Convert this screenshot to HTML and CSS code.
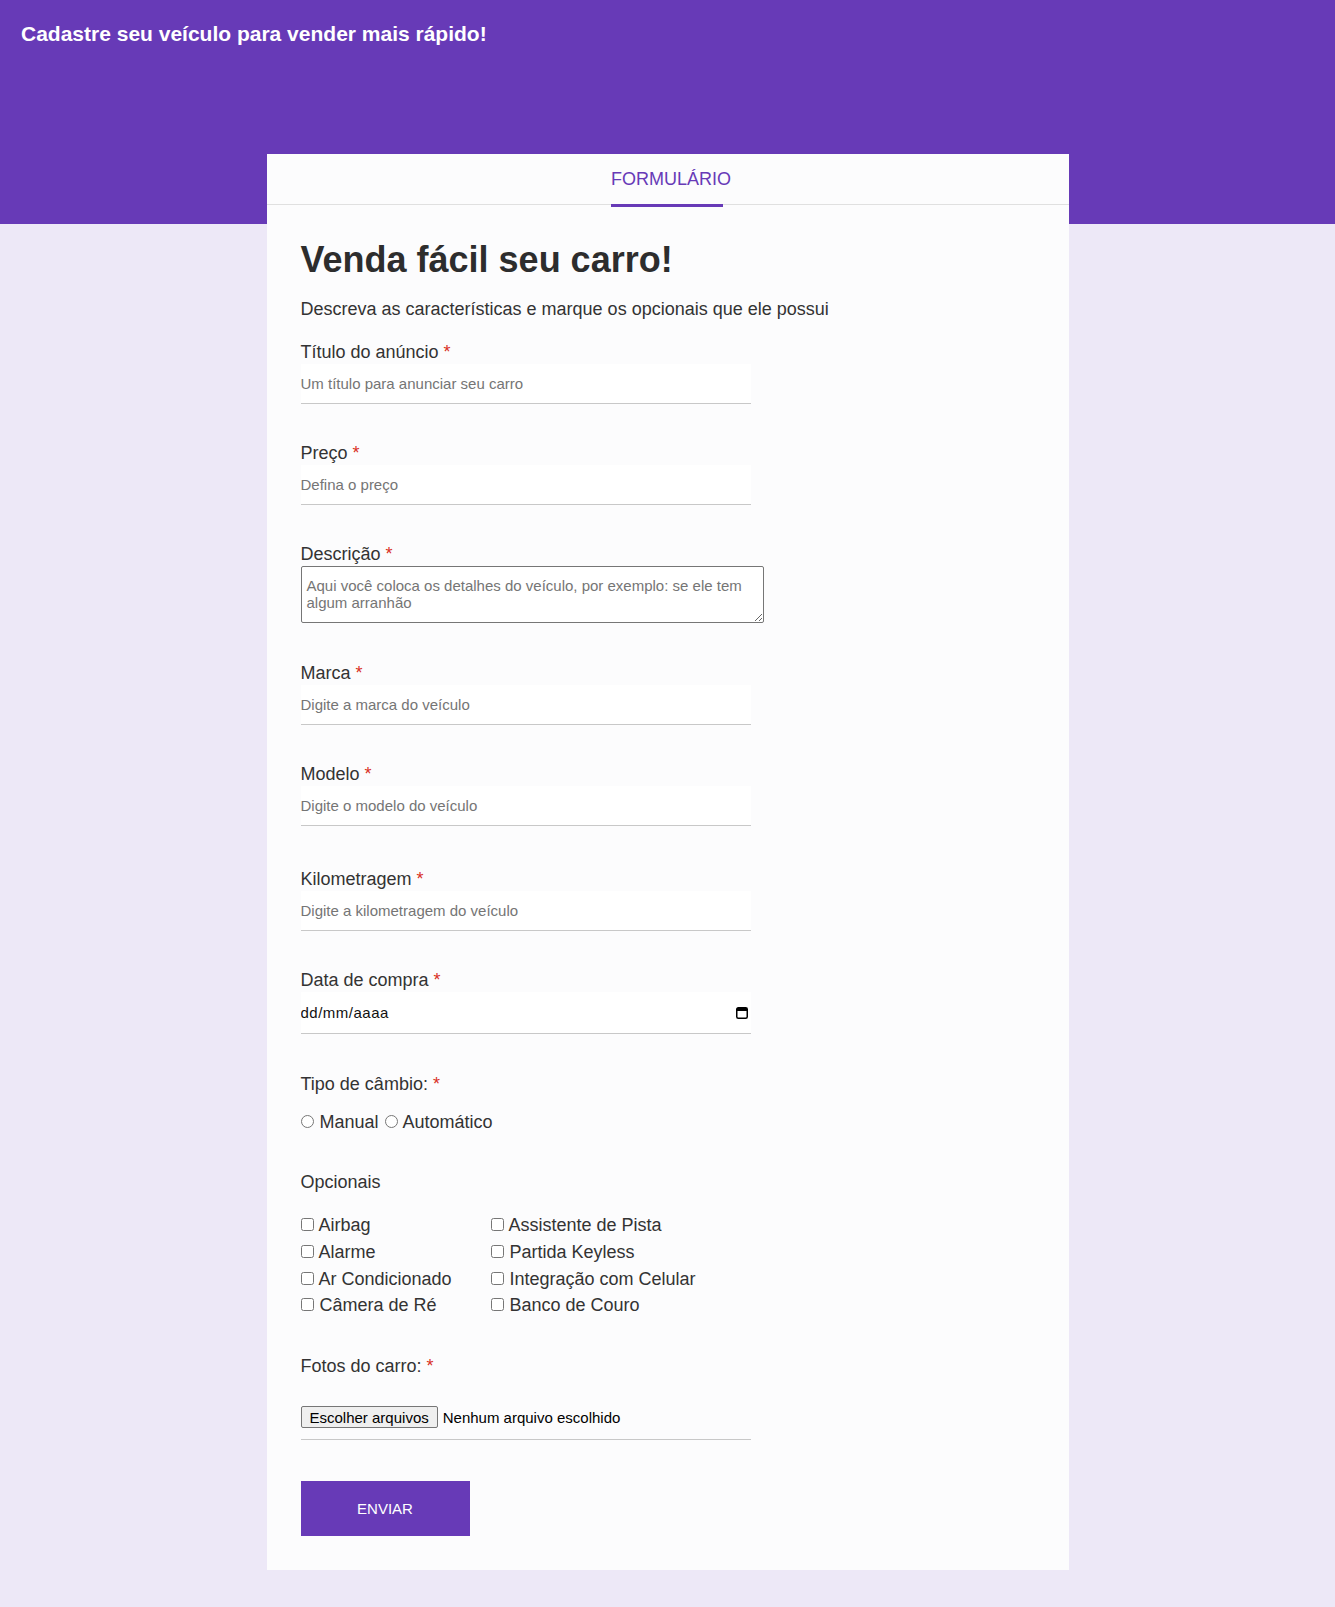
FILE: index.html
```html
<!DOCTYPE html>
<html lang="pt-BR">
<head>
<meta charset="utf-8">
<title>Cadastre seu veículo</title>
<link rel="stylesheet" href="styles.css">
</head>
<body>
<header class="topbar">
  <h1 class="topbar-title">Cadastre seu veículo para vender mais rápido!</h1>
</header>
<main class="card">
  <nav class="tabs">
    <div class="tab">
      <span class="tab-label">FORMULÁRIO</span>
      <span class="tab-indicator"></span>
    </div>
  </nav>
  <form class="form">
    <h2 class="form-title">Venda fácil seu carro!</h2>
    <p class="form-subtitle">Descreva as características e marque os opcionais que ele possui</p>

    <div class="field field-first">
      <label class="field-label">Título do anúncio <span class="req">*</span></label>
      <input class="text-input" type="text" placeholder="Um título para anunciar seu carro">
    </div>

    <div class="field">
      <label class="field-label">Preço <span class="req">*</span></label>
      <input class="text-input" type="text" placeholder="Defina o preço">
    </div>

    <div class="field">
      <label class="field-label">Descrição <span class="req">*</span></label>
      <textarea class="textarea" placeholder="Aqui você coloca os detalhes do veículo, por exemplo: se ele tem algum arranhão"></textarea>
    </div>

    <div class="field field-after-textarea">
      <label class="field-label">Marca <span class="req">*</span></label>
      <input class="text-input" type="text" placeholder="Digite a marca do veículo">
    </div>

    <div class="field">
      <label class="field-label">Modelo <span class="req">*</span></label>
      <input class="text-input" type="text" placeholder="Digite o modelo do veículo">
    </div>

    <div class="field field-wide-gap">
      <label class="field-label">Kilometragem <span class="req">*</span></label>
      <input class="text-input" type="text" placeholder="Digite a kilometragem do veículo">
    </div>

    <div class="field">
      <label class="field-label">Data de compra <span class="req">*</span></label>
      <div class="date-field">
        <input class="date-input" type="text" placeholder="dd/mm/aaaa">
        <svg class="date-icon" width="12" height="13" viewBox="0 0 12 13" aria-hidden="true">
          <rect x="0.75" y="1.75" width="10.5" height="10.5" rx="1.5" fill="none" stroke="#000" stroke-width="1.5"/>
          <rect x="1" y="2" width="10" height="3" fill="#000"/>
        </svg>
      </div>
    </div>

    <div class="field field-group field-cambio">
      <span class="field-label">Tipo de câmbio: <span class="req">*</span></span>
      <div class="radio-row">
        <label class="option"><input class="radio" type="radio" name="cambio"> Manual</label>
        <label class="option"><input class="radio" type="radio" name="cambio"> Automático</label>
      </div>
    </div>

    <div class="field field-group field-opcionais">
      <span class="field-label">Opcionais</span>
      <div class="check-grid">
        <label class="option"><input class="check" type="checkbox"> Airbag</label>
        <label class="option"><input class="check" type="checkbox"> Assistente de Pista</label>
        <label class="option"><input class="check" type="checkbox"> Alarme</label>
        <label class="option"><input class="check" type="checkbox"> Partida Keyless</label>
        <label class="option"><input class="check" type="checkbox"> Ar Condicionado</label>
        <label class="option"><input class="check" type="checkbox"> Integração com Celular</label>
        <label class="option"><input class="check" type="checkbox"> Câmera de Ré</label>
        <label class="option"><input class="check" type="checkbox"> Banco de Couro</label>
      </div>
    </div>

    <div class="field field-group field-fotos">
      <span class="field-label">Fotos do carro: <span class="req">*</span></span>
      <label class="file-field">
        <span class="file-button">Escolher arquivos</span>
        <span class="file-name">Nenhum arquivo escolhido</span>
        <input class="file-input" type="file" multiple>
      </label>
    </div>

    <button class="submit" type="button">ENVIAR</button>
  </form>
</main>
</body>
</html>
```

FILE: styles.css
```css
html, body {
  margin: 0;
  padding: 0;
}

body {
  background: #ede8f7;
  font-family: "Liberation Sans", Arial, sans-serif;
  color: #333;
  padding-bottom: 37px;
}

.topbar {
  background: #673ab7;
  height: 224px;
  box-sizing: border-box;
  padding: 22px 21px 0;
}

.topbar-title {
  margin: 0;
  color: #fff;
  font-size: 21px;
  font-weight: bold;
  line-height: normal;
}

.card {
  display: block;
  width: 802px;
  margin: -70px auto 0;
  background: #fcfcfd;
}

.tabs {
  display: flex;
  justify-content: center;
  border-bottom: 1px solid #e0e0e0;
}

.tab {
  display: flex;
  flex-direction: column;
  align-items: flex-start;
  padding: 15px 0 0 7px;
  margin-bottom: -3px;
  color: #673ab7;
  font-size: 18px;
}

.tab-label {
  line-height: normal;
}

.tab-indicator {
  display: block;
  width: 112px;
  height: 3px;
  margin-top: 14px;
  background: #673ab7;
}

.form {
  padding: 34px 34px 34px;
}

.form-title {
  margin: 0;
  font-size: 36px;
  font-weight: bold;
  color: #2d2d2d;
  line-height: normal;
}

.form-subtitle {
  margin: 18px 0 0;
  font-size: 18px;
  line-height: normal;
  color: #333;
}

.field {
  margin-top: 39px;
}

.field-first {
  margin-top: 22px;
}

.field-after-textarea {
  margin-top: 40px;
}

.field-wide-gap {
  margin-top: 43px;
}

.field-label {
  display: block;
  font-size: 18px;
  line-height: normal;
  color: #333;
}

.req {
  color: #d93025;
}

.text-input {
  display: block;
  box-sizing: border-box;
  width: 450px;
  height: 40px;
  margin-top: 1px;
  padding: 0;
  border: none;
  border-bottom: 1px solid #c8c8c8;
  background: #fff;
  font-family: "Liberation Sans", Arial, sans-serif;
  font-size: 15px;
  color: #333;
  outline: none;
}

.text-input::placeholder,
.textarea::placeholder {
  color: #757575;
  opacity: 1;
}

.textarea {
  display: block;
  box-sizing: border-box;
  width: 463px;
  height: 57px;
  margin-top: 1px;
  padding: 10px 5px;
  border: 1px solid #767676;
  border-radius: 2px;
  background: #fff;
  font-family: "Liberation Sans", Arial, sans-serif;
  font-size: 15px;
  line-height: normal;
}

.date-field {
  display: flex;
  align-items: center;
  box-sizing: border-box;
  width: 450px;
  height: 42px;
  margin-top: 1px;
  padding-right: 3px;
  border-bottom: 1px solid #c8c8c8;
  background: #fff;
}

.date-input {
  flex: 1;
  min-width: 0;
  border: none;
  padding: 0;
  background: transparent;
  font-family: "Liberation Sans", Arial, sans-serif;
  font-size: 15px;
  letter-spacing: 0.5px;
  outline: none;
}

.date-input::placeholder {
  color: #111;
  opacity: 1;
}

.date-icon {
  display: block;
  flex: none;
}

.field-cambio {
  margin-top: 40px;
}

.radio-row {
  margin-top: 17px;
  font-size: 18px;
  line-height: normal;
  color: #333;
}

.option {
  color: #333;
  font-size: 18px;
}

.radio,
.check {
  margin: 0 1px 0 0;
  width: 13px;
  height: 13px;
}

.option + .option .radio {
  margin-left: 1px;
}

.field-opcionais {
  margin-top: 39px;
}

.check-grid {
  display: grid;
  grid-template-columns: 190px auto;
  justify-content: start;
  margin-top: 19px;
  line-height: 26.8px;
}

.field-fotos {
  margin-top: 37px;
}

.file-field {
  display: flex;
  align-items: center;
  gap: 5px;
  box-sizing: border-box;
  width: 450px;
  margin-top: 1px;
  padding: 28px 0 11px;
  border-bottom: 1px solid #c8c8c8;
  font-size: 15px;
  color: #000;
}

.file-button {
  display: inline-flex;
  align-items: center;
  box-sizing: border-box;
  height: 22px;
  padding: 0 8px;
  border: 1px solid #767676;
  border-radius: 2px;
  background: #efefef;
  color: #000;
  white-space: nowrap;
}

.file-name {
  white-space: nowrap;
}

.file-input {
  display: none;
}

.submit {
  display: block;
  width: 169px;
  height: 55px;
  margin-top: 41px;
  border: none;
  border-radius: 0;
  background: #673ab7;
  color: #fff;
  font-family: "Liberation Sans", Arial, sans-serif;
  font-size: 15px;
  cursor: pointer;
}
```
